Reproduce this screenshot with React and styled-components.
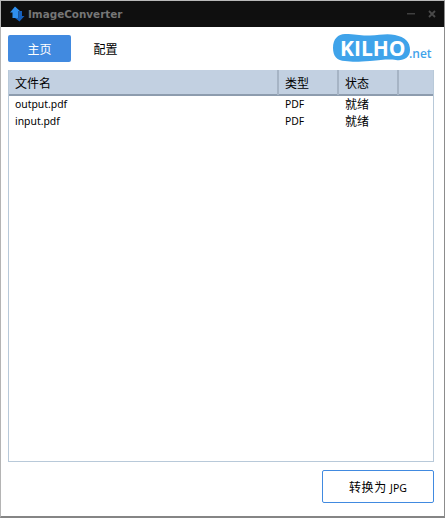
import React from "react";
import styled, { createGlobalStyle } from "styled-components";

const Global = createGlobalStyle`
  html, body { margin: 0; padding: 0; background: #fff; }
  body { font-family: "Liberation Sans", "Noto Sans CJK SC", sans-serif; }
`;

const Win = styled.div`
  box-sizing: border-box;
  width: 445px;
  height: 518px;
  display: flex;
  flex-direction: column;
  background: #fff;
  border-style: solid;
  border-color: #b9b9b9 #8c8c8c #858585 #b4b4b4;
  border-width: 1px 1px 2px 1px;
`;

const TitleBar = styled.div`
  height: 26px;
  flex: none;
  background: #0f0f0f;
  display: flex;
  align-items: center;
  padding: 0 8px 0 8px;
`;

const AppName = styled.span`
  font-family: "DejaVu Sans", sans-serif;
  font-weight: bold;
  font-size: 10.4px;
  color: #767676;
  margin-left: 3px;
  flex: 1;
`;

const WinButtons = styled.div`
  display: flex;
  align-items: center;
  gap: 13px;
`;

const Toolbar = styled.div`
  box-sizing: border-box;
  height: 43px;
  flex: none;
  display: flex;
  align-items: flex-start;
  padding: 8px 0 0 7px;
  position: relative;
`;

const Tab = styled.button`
  box-sizing: border-box;
  width: 63px;
  height: 27px;
  margin-right: 3px;
  padding: 0;
  border: 0;
  border-radius: 2px;
  background: ${(p) => (p.$active ? "#418ae0" : "transparent")};
  color: ${(p) => (p.$active ? "#fff" : "#000")};
  font-family: "Noto Sans CJK SC", sans-serif;
  font-size: 12px;
`;

const Logo = styled.div`
  position: absolute;
  left: 331px;
  top: 5px;
  width: 104px;
  height: 32px;
`;

const LogoWord = styled.span`
  position: absolute;
  left: 8px;
  top: 1px;
  font-family: "Open Sans", "Liberation Sans", sans-serif;
  font-weight: 700;
  font-size: 21px;
  line-height: 30px;
  color: #fff;
`;

const LogoNet = styled.span`
  position: absolute;
  left: 77px;
  top: 15px;
  font-family: "Open Sans", "Liberation Sans", sans-serif;
  font-weight: 600;
  font-size: 12px;
  line-height: 14px;
  color: #3fa3ea;
`;

const TablePanel = styled.div`
  box-sizing: border-box;
  flex: 1;
  margin: 0 10px 0 7px;
  border: 1px solid #b8c9d9;
  border-top: 0;
  display: flex;
  flex-direction: column;
  min-height: 0;
`;

const HeaderRow = styled.div`
  box-sizing: border-box;
  height: 26px;
  flex: none;
  display: grid;
  grid-template-columns: 270px 60px 60px 1fr;
  background: #c2d0e1;
  border-bottom: 2px solid #8d9cae;
`;

const HeaderCell = styled.div`
  box-sizing: border-box;
  border-right: ${(p) => (p.$last ? "0" : "2px solid #a6b4c5")};
  padding-left: 6px;
  font-family: "Noto Sans CJK SC", sans-serif;
  font-size: 12px;
  line-height: 25px;
  color: #000;
`;

const Row = styled.div`
  height: 17px;
  display: grid;
  grid-template-columns: 270px 60px 60px 1fr;
  line-height: 17px;
  color: #000;
`;

const Rows = styled.div`
  padding-top: 0;
`;

const Cell = styled.div`
  padding-left: 6px;
  font-family: "Noto Sans", "Noto Sans CJK SC", sans-serif;
  font-size: ${(p) => (p.$cjk ? "12px" : "10.4px")};
  color: #000;
`;

const Footer = styled.div`
  height: 54px;
  flex: none;
  display: flex;
  justify-content: flex-end;
  align-items: flex-start;
  padding: 8px 10px 0 0;
  box-sizing: border-box;
`;

const Convert = styled.button`
  box-sizing: border-box;
  width: 112px;
  height: 33px;
  background: #fff;
  border: 1px solid #418ae0;
  border-radius: 2px;
  font-family: "Noto Sans CJK SC", sans-serif;
  font-size: 12px;
  letter-spacing: 0.6px;
  color: #000;
  padding: 0;
`;

const Latin = styled.span`
  font-family: "Noto Sans", sans-serif;
  font-size: 10.5px;
  letter-spacing: 0;
`;

const rows = ["output.pdf", "input.pdf"];

export default function App() {
  return (
    <>
      <Global />
      <Win>
        <TitleBar>
          <svg width="16" height="16" viewBox="0 0 16 16">
            <path d="M6 0.5 L11 5 H9.5 V12 H3.5 V6.5 H1 Z" fill="#2f8fee" />
            <path d="M9.5 5 H13 V10 H15.5 L10.5 15.5 L6 12 H9.5 Z" fill="#1560bd" />
          </svg>
          <AppName>ImageConverter</AppName>
          <WinButtons>
            <svg width="8" height="8" viewBox="0 0 8 8">
              <rect x="0" y="3" width="8" height="1.5" fill="#3f3f3f" />
            </svg>
            <svg width="8" height="8" viewBox="0 0 8 8">
              <path d="M1 1 L7 7 M7 1 L1 7" stroke="#4a4a4a" strokeWidth="1.8" />
            </svg>
          </WinButtons>
        </TitleBar>
        <Toolbar>
          <Tab $active>主页</Tab>
          <Tab>配置</Tab>
          <Logo>
            <svg width="104" height="32" viewBox="0 0 104 32">
              <path
                d="M1 16 C1 7 6 2 13 2 C24 2 28 4 38 3.5 C48 3 55 1 63 3 C73 5 78 10 78 18 C78 26 71 29 64 28 C56 27 50 28 38 29 C26 30 20 30 13 29 C5 29 1 24 1 16 Z"
                fill="#3fa3ea"
              />
            </svg>
            <LogoWord>KILHO</LogoWord>
            <LogoNet>.net</LogoNet>
          </Logo>
        </Toolbar>
        <TablePanel>
          <HeaderRow>
            <HeaderCell>文件名</HeaderCell>
            <HeaderCell>类型</HeaderCell>
            <HeaderCell>状态</HeaderCell>
            <HeaderCell $last />
          </HeaderRow>
          <Rows>
            {rows.map((r) => (
              <Row key={r}>
                <Cell>{r}</Cell>
                <Cell>PDF</Cell>
                <Cell $cjk>就绪</Cell>
              </Row>
            ))}
          </Rows>
        </TablePanel>
        <Footer>
          <Convert>
            转换为 <Latin>JPG</Latin>
          </Convert>
        </Footer>
      </Win>
    </>
  );
}
